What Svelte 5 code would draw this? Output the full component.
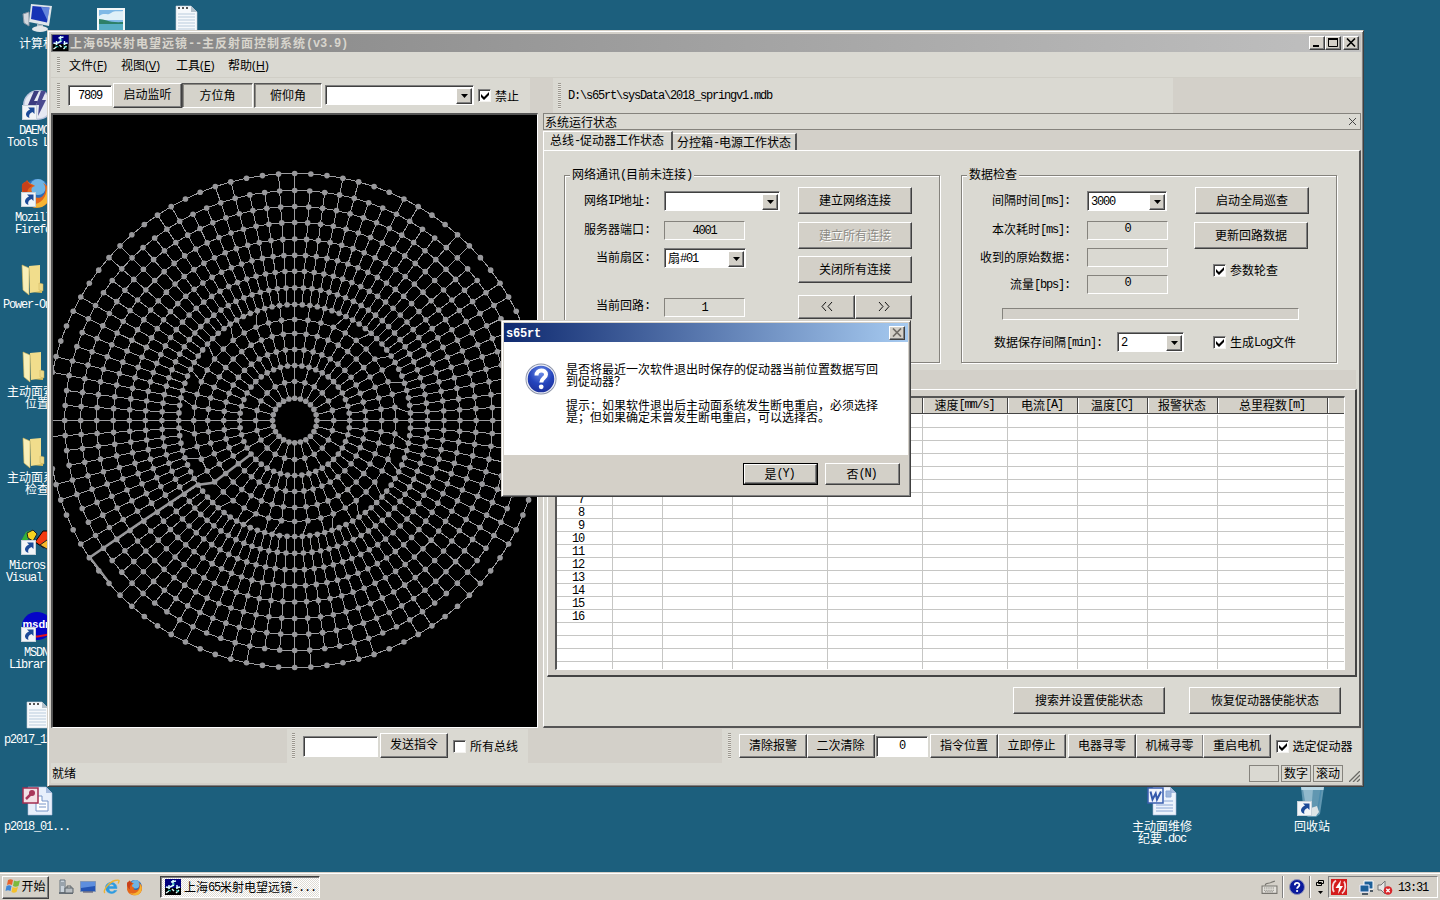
<script>
  const runs = (s) => (s.match(/[\x20-\x7e]+|[^\x20-\x7e]+/g) || []).map((x) => ({ s: x, l: x.charCodeAt(0) < 127 }));

  // reflector mesh
  const CX = 241.7, CY = 305.5;
  const rings = [[247, 96], [230, 96], [214, 96], [198, 96], [181.5, 96], [165.3, 96], [149.3, 96], [132.8, 96], [116, 96], [101, 48], [87, 48], [71, 48], [55, 48], [39, 24], [22.2, 24]];
  const pt = (r, n, k) => {
    const a = (2 * Math.PI * k) / n;
    return [CX + r * Math.sin(a), CY - r * Math.cos(a)];
  };
  const f = (p) => p[0].toFixed(1) + ' ' + p[1].toFixed(1);
  let mesh = '';
  const nodes = [];
  rings.forEach(([r, n], i) => {
    for (let k = 0; k < n; k++) {
      const p = pt(r, n, k);
      nodes.push(p);
      mesh += (k ? 'L' : 'M') + f(p);
    }
    mesh += 'Z';
    if (i === 0) return;
    const [ro, no] = rings[i - 1];
    for (let k = 0; k < n; k++) {
      if (i === 1 && k % 4 !== 0 && k % 4 !== 3) continue;
      let j = no === n ? k : 2 * k;
      if (i === 9 && k % 2 && k !== 1 && k !== 47) j += 1;
      mesh += 'M' + f(pt(r, n, k)) + 'L' + f(pt(ro, no, j));
    }
  });

  const icons = [
    { x: 37, y: 3, k: 'pc', t: ['计算机'] },
    { x: 37, y: 90, k: 'daemon', t: ['DAEMON', 'Tools Lite'] },
    { x: 36, y: 177, k: 'fox', t: ['Mozilla', 'Firefox'] },
    { x: 36, y: 264, k: 'folder', t: ['Power-On...'] },
    { x: 37, y: 351, k: 'folder', t: ['主动面索引', '位置'] },
    { x: 37, y: 437, k: 'folder', t: ['主动面系统', '检查'] },
    { x: 36, y: 525, k: 'vs', t: ['Micros...', 'Visual ...'] },
    { x: 36, y: 612, k: 'msdn', t: ['MSDN', 'Librar...'] },
    { x: 37, y: 699, k: 'note', t: ['p2017_12...'] },
    { x: 37, y: 786, k: 'access', t: ['p2018_01...'] },
    { x: 111, y: 3, k: 'pic', t: [] },
    { x: 186, y: 3, k: 'note', t: [] },
    { x: 1162, y: 786, k: 'word', t: ['主动面维修', '纪要.doc'] },
    { x: 1312, y: 786, k: 'bin', t: ['回收站'] }
  ];
  const shortcut = ['daemon', 'fox', 'vs', 'msdn', 'bin'];
  const heads = [[56, ''], [50, ''], [70, ''], [95, ''], [95, ''], [85, '速度[mm/s]'], [70, '电流[A]'], [70, '温度[C]'], [70, '报警状态'], [110, '总里程数[m]'], [17, '']];
  const rows = Array.from({ length: 20 }, (_, i) => (i < 16 ? String(i + 1) : ''));
</script>

{#snippet t(s)}{#each runs(s) as r}<span class:lat={r.l}>{r.s}</span>{/each}{/snippet}

{#snippet arrow()}<span class="drop"><svg width="7" height="4"><path d="M0 0h7L3.5 4z" /></svg></span>{/snippet}

{#snippet check(on)}<span class="check">{#if on}<svg width="9" height="9" viewBox="0 0 9 9"><path d="M0 2v3l3 3 5-5V0L3 5z" /></svg>{/if}</span>{/snippet}

{#snippet antenna(w)}
  <svg width={w} height="16" viewBox="0 0 16 16" class="app-ico">
    <rect width="16" height="16" fill="#000" /><path d="M0 0h16v9H0z" fill="#00007c" />
    <path d="M8 1v6M6 3l5-1M5 8l4-2M4 6v4M1 8l4 1M12 6v4M11 9l4-1M7 10l2 2M1 14l3-2M11 14l3-3" stroke="#dff" fill="none" stroke-width="1.400" />
    <path d="M3 11l3 1M11 11l3 2M7 5h3" stroke="#16b8a8" />
  </svg>
{/snippet}

{#snippet fox(w)}
  <svg width={w} height={w} viewBox="0 0 32 32">
    <circle cx="17" cy="15" r="13" fill="#2b6cb8" /><circle cx="18" cy="10" r="8" fill="#6fb4e4" />
    <path d="M2 8c2-4 4-2 5-5 2 4 6 4 8 6-4 1-4 4-3 6 3 0 4 2 2 4 4 4 10 1 11-4 1-4 0-7-2-9 8 4 9 13 5 19C22 34 5 32 2 20z" fill="#e4661b" />
    <path d="M27 9c5 8 3 17-5 21-6 2-12 0-15-4 10 4 20-2 20-17z" fill="#f6b432" />
    <path d="M2 8c2-4 4-2 5-5 1 4 4 5 6 6-5 1-7 6-5 11-4-3-7-6-6-12z" fill="#c8401a" />
  </svg>
{/snippet}

{#snippet help(w)}
  <svg width={w} height={w} viewBox="0 0 32 32">
    <defs><radialGradient id="hb" cx=".5" cy=".25" r=".8"><stop offset="0" stop-color="#6f8fe8" /><stop offset=".55" stop-color="#2444bc" /><stop offset="1" stop-color="#1c2f98" /></radialGradient></defs>
    <circle cx="16" cy="16" r="15.500" fill="#8b93a8" /><circle cx="16" cy="16" r="14.600" fill="#eef0f8" /><circle cx="16" cy="16" r="13.300" fill="url(#hb)" />
    <path d="M11.500 12.500c0-6.500 9.500-6.500 9.500-1 0 3.600-4.700 3.700-4.700 8" stroke="#fff" stroke-width="4" fill="none" /><circle cx="16.200" cy="23.800" r="2.400" fill="#fff" />
  </svg>
{/snippet}

{#snippet deskIcon(k)}
  {#if k === 'fox'}{@render fox(32)}
  {:else}
  <svg width="32" height="32" viewBox="0 0 32 32">
    {#if k === 'pc'}
      <path d="M2 11l6-2v14l-5-3z" fill="#d3d8de" stroke="#8794a3" /><path d="M10 1l21 2-3 20-20-4z" fill="#dfe5ea" /><path d="M11.500 3l17 1.500-2.500 15-16-3.500z" fill="#1633b5" /><path d="M20 4l8.500.6-2 13z" fill="#8fb2ef" opacity=".65" /><path d="M16 21l6 1v4l-6-1z" fill="#b6bec6" /><ellipse cx="19" cy="26" rx="8" ry="3" fill="#e3e7ea" />
    {:else if k === 'daemon'}
      <circle cx="17" cy="15" r="15" fill="#b9c4dc" /><circle cx="17" cy="15" r="13.500" fill="#e6e9f2" /><path d="M13 1h5l-5 10h4L8 27l2-12H7z" fill="#3c3c80" /><path d="M20 1h5l-4 9h4l-8 16 1-11h-3z" fill="#4a4a90" />
    {:else if k === 'folder'}
      <path d="M10 2l10 1v18l2 2v6l-12-1z" fill="#d9bf5e" /><path d="M9 2l11-1v26l-10 2z" fill="#f1dd8c" /><path d="M19 19l4 1v7l-4-1z" fill="#ecd98a" stroke="#cdb35a" stroke-width=".5" /><path d="M2 1l7 3v27l-6-5z" fill="#f8efb8" stroke="#d0b455" stroke-width=".6" />
    {:else if k === 'vs'}
      <path d="M1 16l5-9 5-2-4 12z" fill="#35b13a" /><path d="M7 8l6-3 4 4-4 7-5-3z" fill="#f6d420" stroke="#222" /><path d="M15 17l8-11h9v10l-8 7z" fill="#f23a12" stroke="#000" /><path d="M20 20l7-5 5 5-5 4z" fill="#f5b82a" stroke="#222" />
    {:else if k === 'msdn'}
      <ellipse cx="17" cy="14" rx="15" ry="14" fill="#0505c8" /><path d="M2 22c10 4 22 3 30-1" stroke="#e3101b" stroke-width="2" fill="none" /><text x="2.500" y="16" font-family="Liberation Sans" font-weight="700" font-size="11" fill="#fff">msdn</text>
    {:else if k === 'note'}
      <path d="M6 3h15l6 6v20H6z" fill="#f6f9fc" stroke="#c2cbd3" stroke-width=".6" /><path d="M21 3v6h6z" fill="#b3c0ca" /><path d="M8 11h17M8 14h17M8 17h17M8 20h17M8 23h17M8 26h17" stroke="#b9cbdc" /><path d="M8 5h2M12 5h2M16 5h2" stroke="#555" stroke-width="2" />
    {:else if k === 'pic'}
      <path d="M2 5h28v24H2z" fill="#f4f7f8" /><path d="M4 7h24v20H4z" fill="#7fb9e6" /><path d="M4 13c6-4 8 0 12-3s8-1 12-2v9H4z" fill="#dff0f8" /><path d="M4 16c6 0 10 4 24 3v4H4z" fill="#2d8068" /><path d="M4 21h24v6H4z" fill="#56aec4" />
    {:else if k === 'access'}
      <path d="M7 1h18l6 6v22H7z" fill="#e8effb" stroke="#a9bbd8" stroke-width=".6" /><path d="M25 1v6h6z" fill="#a7bbdf" /><path d="M15 10h6v5h6v10H15z" fill="#fff" stroke="#7795c8" /><path d="M18 18h7M18 21h7" stroke="#7795c8" /><path d="M2 2h15v15H2z" fill="#f3dfe5" stroke="#a32e50" stroke-width="1.500" /><circle cx="11" cy="7" r="3" fill="#a8365a" /><path d="M10 8l-5 5" stroke="#a8365a" stroke-width="2.500" />
    {:else if k === 'word'}
      <path d="M7 1h17l6 6v22H7z" fill="#edf3fc" stroke="#a9bbd8" stroke-width=".6" /><path d="M24 1v6h6z" fill="#a7bbdf" /><path d="M20 5h5v6h-5zM10 19h17M10 22h17M10 25h17M18 15h9" stroke="#8ca8d6" fill="#9fb7dc" /><path d="M2 2h15v15H2z" fill="#eef3fc" stroke="#3a5fae" stroke-width="1.500" /><path d="M4.500 5.500l2 8 3.200-6 1.300 6 4-8" stroke="#3459ac" stroke-width="2" fill="none" />
    {:else if k === 'bin'}
      <path d="M5 1h23l-4 27-4 3h-8l-4-3z" fill="#8fbdd4" opacity=".6" /><path d="M7 3h10l-2 24h-4z" fill="#d9edf5" opacity=".4" /><path d="M5 1h23l-.5 3h-22z" fill="#b9d8e6" /><path d="M25 4l-4 25" stroke="#4c8bac" stroke-width="1.500" /><path d="M15 22l6-2 2 6-3 4h-5z" fill="#dde4e6" />
    {/if}
  </svg>
  {/if}
{/snippet}

{#snippet chev(right)}<svg width="12" height="9" viewBox="0 0 12 9"><path d={right ? 'M1 0l4 4.500L1 9M7 0l4 4.500L7 9' : 'M5 0L1 4.500 5 9M11 0L7 4.500 11 9'} fill="none" stroke="#111" /></svg>{/snippet}

<div class="desktop">
  {#each icons as ic}
    <div class="dicon" style="left:{ic.x - 37}px;top:{ic.y}px">
      <div class="pic">
        {@render deskIcon(ic.k)}
        {#if shortcut.includes(ic.k)}
          <svg class="sc" width="15" height="15" viewBox="0 0 15 15"><rect x=".5" y=".5" width="14" height="14" fill="#f2f5f8" stroke="#c8d2da" /><path d="M6 2.500h6.500V9l-2-2C8 8 6.500 10 7.500 13 3 11.500 2.500 7 8 4.500z" fill="#1c4a98" /></svg>
        {/if}
      </div>
      {#each ic.t as line}<div class="dl">{@render t(line)}</div>{/each}
    </div>
  {/each}

  <section class="win">
    <header class="title">
      {@render antenna(17)}
      <span class="cap">{@render t('上海65米射电望远镜--主反射面控制系统(v3.9)')}</span>
      <span class="wb"><svg width="10" height="9"><path d="M1 8h6" stroke="#000" stroke-width="2" /></svg></span>
      <span class="wb"><svg width="10" height="9"><path d="M.5 1h9M.5 0v8.500h9V0" fill="none" stroke="#000" /><path d="M0 1h10" stroke="#000" stroke-width="2" /></svg></span>
      <span class="wb last"><svg width="10" height="9"><path d="M1 .5l8 8M9 .5l-8 8" stroke="#000" stroke-width="1.600" /></svg></span>
    </header>
    <nav class="menu">
      <i class="grip"></i>
      <span style="width:52px">文件<em>(<u>F</u>)</em></span><span style="width:55px">视图<em>(<u>V</u>)</em></span><span style="width:52px">工具<em>(<u>E</u>)</em></span><span>帮助<em>(<u>H</u>)</em></span>
    </nav>
    <div class="tools">
      <div class="band one">
        <i class="grip"></i>
        <span class="edit" style="width:44px">{@render t('7809')}</span>
        <span class="btn" style="width:69px">启动监听</span>
        <span class="flat" style="width:71px">方位角</span>
        <span class="flat" style="width:68px">俯仰角</span>
        <span class="combo" style="width:149px"><b></b>{@render arrow()}</span>
        {@render check(true)}<span>禁止</span>
      </div>
      <div class="band two"><i class="grip"></i>{@render t('D:\\s65rt\\sysData\\2018_springv1.mdb')}</div>
    </div>

    <div class="body">
      <div class="view">
        <svg width="484" height="611" viewBox="0 0 484 611">
          <path d={mesh} fill="none" stroke="#9c9c9f" stroke-width="1" shape-rendering="crispEdges" />
          {#each nodes as p}<circle cx={p[0]} cy={p[1]} r="2.800" fill="#98989b" />{/each}
          <path d="M199.300 338.300L160.300 367.700L143.700 370L90.300 405.700L37 442.300" fill="none" stroke="#98989b" stroke-width="2.600" />
          <path d="M37 442.300L57 468.500" stroke="#98989b" stroke-width="2" />
        </svg>
      </div>
      <div class="dock">
        <div class="dtitle"><span>系统运行状态</span><svg width="9" height="9"><path d="M1 1l7 7M8 1l-7 7" stroke="#444" /></svg></div>
        <div class="tabs"><span class="tab on">{@render t('总线-促动器工作状态')}</span><span class="tab">{@render t('分控箱-电源工作状态')}</span></div>
        <div class="page">
          <div class="groups">
            <div class="group">
              <div class="legend">{@render t('网络通讯(目前未连接)')}</div>
              <div class="col lab" style="width:85px">
                <div style="margin-top:15px">{@render t('网络IP地址:')}</div>
                <div style="margin-top:11px">{@render t('服务器端口:')}</div>
                <div style="margin-top:10px">{@render t('当前扇区:')}</div>
                <div style="margin-top:30px">{@render t('当前回路:')}</div>
              </div>
              <div class="col" style="width:116px;margin-left:14px">
                <span class="combo" style="width:116px;margin-top:15px"><b></b>{@render arrow()}</span>
                <span class="stat" style="margin-top:10px">{@render t('4001')}</span>
                <span class="combo" style="width:82px;margin-top:8px"><b>{@render t('扇#01')}</b>{@render arrow()}</span>
                <span class="stat" style="margin-top:30px">{@render t('1')}</span>
              </div>
              <div class="col" style="margin-left:18px">
                <span class="btn big" style="margin-top:11px">建立网络连接</span>
                <span class="btn big off" style="margin-top:8px">建立所有连接</span>
                <span class="btn big" style="margin-top:7px">关闭所有连接</span>
                <div class="pair"><span class="btn">{@render chev(false)}</span><span class="btn">{@render chev(true)}</span></div>
              </div>
            </div>
            <div class="group vert">
              <div class="legend">数据检查</div>
              <div class="line">
                <div class="col lab" style="width:108px">
                  <div style="margin-top:15px">{@render t('间隔时间[ms]:')}</div>
                  <div style="margin-top:11px">{@render t('本次耗时[ms]:')}</div>
                  <div style="margin-top:10px">{@render t('收到的原始数据:')}</div>
                  <div style="margin-top:9px">{@render t('流量[bps]:')}</div>
                </div>
                <div class="col" style="margin-left:17px">
                  <span class="combo" style="width:80px;margin-top:15px"><b>{@render t('3000')}</b>{@render arrow()}</span>
                  <span class="stat up" style="margin-top:10px">{@render t('0')}</span>
                  <span class="stat" style="margin-top:8px"></span>
                  <span class="stat up" style="margin-top:8px">{@render t('0')}</span>
                </div>
                <div class="col" style="margin-left:26px">
                  <span class="btn big" style="margin-top:11px;margin-left:1px">启动全局巡查</span>
                  <span class="btn big" style="margin-top:8px">更新回路数据</span>
                  <div class="ck" style="margin:13px 0 0 19px">{@render check(true)}<span>参数轮查</span></div>
                </div>
              </div>
              <div class="prog"></div>
              <div class="save">
                <div class="sl">{@render t('数据保存间隔[min]:')}</div>
                <span class="combo" style="width:67px"><b>{@render t('2')}</b>{@render arrow()}</span>
                <div class="ck">{@render check(true)}<span>{@render t('生成Log文件')}</span></div>
              </div>
            </div>
          </div>
          <div class="panel">
            <div class="list">
              <div class="lh">{#each heads as h}<span style="width:{h[0]}px">{@render t(h[1])}</span>{/each}</div>
              {#each rows as r}
                <div class="lr">{#each heads as h, i}<span style="width:{h[0]}px">{#if i === 0}{@render t(r)}{/if}</span>{/each}</div>
              {/each}
            </div>
          </div>
          <div class="acts"><span class="btn">搜索并设置使能状态</span><span class="btn">恢复促动器使能状态</span></div>
        </div>
      </div>
    </div>

    <div class="foot">
      <div class="band three">
        <i class="grip"></i><span class="edit" style="width:75px"></span><span class="btn" style="width:68px">发送指令</span>
        {@render check(false)}<span>所有总线</span>
      </div>
      <div class="band four">
        <i class="grip"></i>
        <span class="btn">清除报警</span><span class="btn">二次清除</span>
        <span class="edit" style="width:52px">{@render t('0')}</span>
        <span class="btn">指令位置</span><span class="btn">立即停止</span>
        <span class="btn gap">电器寻零</span><span class="btn">机械寻零</span><span class="btn">重启电机</span>
        {@render check(true)}<span>选定促动器</span>
      </div>
    </div>
    <footer class="status">
      <span class="ready">就绪</span><span class="pane"></span><span class="pane">数字</span><span class="pane">滚动</span>
      <svg width="11" height="11"><path d="M0 11L11 0M4 11l7-7M8 11l3-3" stroke="#6a6a66" stroke-width="1.300" /></svg>
    </footer>
  </section>

  <section class="dialog">
    <header><span>{@render t('s65rt')}</span><span class="wb"><svg width="10" height="9"><path d="M1 .5l8 8M9 .5l-8 8" stroke="#706c66" stroke-width="1.700" /></svg></span></header>
    <div class="msg">
      {@render help(32)}
      <div class="lines">
        <p>是否将最近一次软件退出时保存的促动器当前位置数据写回</p>
        <p>到促动器？</p>
        <p>&nbsp;</p>
        <p>提示：如果软件退出后主动面系统发生断电重启，必须选择</p>
        <p>是；但如果确定未曾发生断电重启，可以选择否。</p>
      </div>
    </div>
    <div class="dbtns"><span class="btn def">{@render t('是(Y)')}</span><span class="btn">{@render t('否(N)')}</span></div>
  </section>

  <div class="taskbar">
    <span class="btn start">
      <svg width="16" height="16" viewBox="0 0 16 16"><path d="M3 2c2-1 3-1 5 0L7 7C5 6 4 6 2 7z" fill="#e8632c" /><path d="M9 2.500c2 1 3 1 6 0L13.500 8c-2 1-4 1-5.500 0z" fill="#7dba3c" /><path d="M1.500 8c2-1 3-1 5 0l-1 5c-2-1-3-1-5 0z" fill="#3f87d8" /><path d="M7.500 9c2 1 3 1 5.500 0l-1.500 5c-2 1-3.500 1-5 0z" fill="#f5c12c" /></svg>开始</span>
    <div class="quick">
      <svg width="16" height="16" viewBox="0 0 16 16"><path d="M2 1h5v13H2z" fill="#c9d2da" stroke="#68747f" /><path d="M3 4h3M3 6h3" stroke="#68747f" /><path d="M1 14h14" stroke="#687078" stroke-width="2" /><path d="M7 9h8v5H7z" fill="#b9bec2" stroke="#5a6268" /><path d="M9 9V7h4v2" fill="none" stroke="#5a6268" /></svg>
      <svg width="16" height="16" viewBox="0 0 16 16"><path d="M.5 2.500h15v10H.5z" fill="#2454b4" stroke="#8197b8" /><path d="M1 3h14v4L1 9z" fill="#5d8ede" /><path d="M3 13h10" stroke="#446" /></svg>
      <svg width="17" height="16" viewBox="0 0 17 16"><path d="M14 9.500H6c0 4 4 4 5 2h2.800C11 16.500 2.500 15 2.500 8.500S14 1 14 9.500zM6 7.500h5C10.500 4.500 6.500 4.500 6 7.500z" fill="#2d9be0" stroke="#2d9be0" stroke-width=".5" /><path d="M2 14C-1 12 6 3 12 1.500s4 1 3 3" fill="none" stroke="#efb32e" stroke-width="1.300" /></svg>
      {@render fox(17)}
    </div>
    <span class="task">{@render antenna(16)}<span>{@render t('上海65米射电望远镜-...')}</span></span>
    <div class="tray">
      <svg width="17" height="15" viewBox="0 0 16 14"><path d="M1 5.500h14v7H1z" fill="#e4e2dc" stroke="#77756f" /><path d="M3 7.500h10M3 9.500h10M4 11h8" stroke="#77756f" stroke-dasharray="1 1" /><path d="M4 5c0-3 4-1 6-3l3-1" stroke="#77756f" fill="none" /></svg>
      <i class="sep"></i>
      <span class="th"><svg width="16" height="16" viewBox="0 0 16 16"><circle cx="8" cy="8" r="7.500" fill="#0a1a9c" stroke="#8c90b8" /><path d="M5.800 6.200c0-3 4.600-3 4.600-.3 0 1.900-2.300 1.800-2.300 3.800" stroke="#fff" stroke-width="1.800" fill="none" /><circle cx="8.100" cy="12" r="1.100" fill="#fff" /></svg></span>
      <i class="sep"></i>
      <svg class="chev" width="9" height="16" viewBox="0 0 9 16"><path d="M2.500 1.500h5v3h-5zM.5 3.500h5v3h-5z" fill="#d4d0c8" stroke="#000" /><path d="M2 12h5l-2.500 3z" /></svg>
      <div class="box">
        <svg width="16" height="16" viewBox="0 0 16 16"><rect width="16" height="16" fill="#d41c1c" /><path d="M5 1.500C1 4 1 10 3 13M11 14.500c4-3 4-9 2-12" stroke="#f7d6d6" stroke-width="1.800" fill="none" /><path d="M10 1L4.500 9H8l-1 6 5-8H9z" fill="#fff" /></svg>
        <svg width="15" height="15" viewBox="0 0 15 15"><path d="M5 1h9v8H5z" fill="#1d5f98" stroke="#fff" /><path d="M1 5h9v7H1z" fill="#1d5f98" stroke="#eef" /><path d="M3 14h6M11 11h3" stroke="#234" stroke-width="1.500" /></svg>
        <svg width="16" height="15" viewBox="0 0 16 15"><path d="M1 5h3l4-4v13l-4-4H1z" fill="#e8e8e8" stroke="#777" /><circle cx="11" cy="10.500" r="4.300" fill="#d8262a" /><path d="M9.300 8.800l3.400 3.400M12.700 8.800l-3.400 3.400" stroke="#fff" stroke-width="1.300" /></svg>
        <span>{@render t('13:31')}</span>
      </div>
    </div>
  </div>
</div>

<style>
  :global(body) { margin: 0; overflow: hidden; }
  .desktop { position: relative; width: 1440px; height: 900px; overflow: hidden; background: #1c5f7d; font: 12px/16px "Noto Sans CJK SC", sans-serif; color: #000; white-space: nowrap; }
  .desktop * { box-sizing: border-box; }
  svg { display: block; flex: none; }
  .lat { font-family: "Liberation Mono", monospace; font-size: 12px; letter-spacing: -1.2px; line-height: 10px; vertical-align: 1px; white-space: pre; }

  .dicon { position: absolute; width: 74px; color: #fff; text-align: center; }
  .pic { position: relative; width: 32px; height: 34px; margin: 0 auto; }
  .sc { position: absolute; left: 1px; top: 15px; }
  .dl { height: 12px; line-height: 12px; }

  .win { position: absolute; left: 47px; top: 30px; width: 1317px; height: 757px; background: #d3d0c9; border: 1px solid #d4d0c8; border-right-color: #404040; border-bottom-color: #404040; box-shadow: inset 1px 1px #fff, inset -1px -1px #808080; padding: 3px 2px 3px 3px; display: flex; flex-direction: column; }
  .title { height: 18px; display: flex; align-items: center; background: linear-gradient(90deg, #828282, #c0c0c0); padding-right: 2px; }
  .app-ico { margin-left: 1px; }
  .cap { flex: 1; margin-left: 1px; color: #d8d5cd; font-weight: 700; letter-spacing: 1px; }
  .cap .lat, .cap :global(.lat) { letter-spacing: -0.2px; }
  .wb { width: 16px; height: 14px; display: flex; align-items: center; justify-content: center; background: #d4d0c8; border: 1px solid #fff; border-right-color: #404040; border-bottom-color: #404040; box-shadow: inset -1px -1px #808080; padding: 0 2px 1px 1px; }
  .wb.last { margin-left: 2px; }
  .menu { height: 26px; display: flex; align-items: center; background: #dad9d2; padding-left: 6px; border-bottom: 1px solid #d0cec6; }
  .menu .grip { height: 15px; margin-right: 9px; }
  .menu span { padding-top: 1px; }
  .menu em { font: 12.500px/12px "Open Sans", sans-serif; }
  .grip { flex: none; width: 3px; height: 26px; background: repeating-linear-gradient(#9b9890 0 1px, #e9e7e1 1px 2px); }
  .tools { height: 35px; display: flex; }
  .band { display: flex; align-items: center; background: #dad9d2; }
  .one { width: 479px; padding-left: 6px; }
  .one .grip { margin-right: 8px; }
  .one .btn { margin-left: 1px; margin-bottom: 1px; }
  .flat { height: 25px; display: flex; align-items: center; justify-content: center; background: #d5d3cb; border: 1px solid #555; border-right-color: #fff; border-bottom-color: #fff; box-shadow: inset 1px 1px #8a8882; margin: 0 1px 1px 0; padding-bottom: 1px; }
  .one .combo { margin: 0 4px 2px 2px; }
  .two { margin-left: 23px; width: 620px; padding-left: 5px; }
  .two .grip { margin-right: 7px; }
  .check { flex: none; width: 13px; height: 13px; background: #fff; border: 1px solid #808080; border-right-color: #f4f3f0; border-bottom-color: #f4f3f0; box-shadow: inset 1px 1px #404040; padding: 2px 0 0 2px; margin-right: 4px; }
  .edit { height: 21px; display: flex; align-items: center; justify-content: center; background: #fff; border: 1px solid #808080; border-right-color: #fff; border-bottom-color: #fff; box-shadow: inset 1px 1px #404040; }
  .btn { height: 25px; display: flex; align-items: center; justify-content: center; flex: none; background: #d3d0c8; border: 1px solid #fff; border-right-color: #404040; border-bottom-color: #404040; box-shadow: inset -1px -1px #808080; padding-bottom: 2px; }
  .combo { flex: none; height: 20px; display: flex; background: #fff; border: 1px solid #808080; border-right-color: #fff; border-bottom-color: #fff; box-shadow: inset 1px 1px #404040; padding: 2px 1px 1px 3px; }
  .combo b { flex: 1; font-weight: 400; line-height: 14px; }
  .drop { width: 16px; height: 16px; display: flex; align-items: center; justify-content: center; background: #d3d0c8; border: 1px solid #fff; border-right-color: #404040; border-bottom-color: #404040; box-shadow: inset -1px -1px #808080; }

  .body { height: 615px; display: flex; }
  .view { flex: none; width: 487px; background: #000; border: 1px solid #777; border-top: 2px solid #555; border-left: 2px solid #555; border-right-color: #fff; border-bottom-color: #fff; overflow: hidden; }
  .dock { flex: none; margin-left: 5px; width: 818px; }
  .dtitle { height: 17px; border: 1px solid #85837d; background: #dad9d2; display: flex; align-items: center; justify-content: space-between; padding: 0 3px 0 1px; }
  .tabs { height: 20px; display: flex; align-items: flex-end; }
  .tab { height: 17px; line-height: 16px; padding: 0 4px; border-right: 2px solid #555; border-top: 1px solid #fff; background: #d6d4cd; }
  .tab.on { height: 19px; width: 130px; padding: 0 0 0 6px; background: #dad9d2; border-left: 1px solid #fff; }
  .page { height: 578px; background: #dad9d2; border: 1px solid #fff; border-right: 2px solid #555; border-bottom: 2px solid #555; padding: 0 3px; }
  .groups { height: 238px; display: flex; padding: 24px 0 0 17px; background: linear-gradient(#dad9d2 219px, #d3d0c9 219px); }
  .group { flex: none; position: relative; display: flex; width: 376px; height: 188px; border: 1px solid #85837d; box-shadow: inset 1px 1px #fff, 1px 1px #fff; margin-right: 21px; }
  .vert { display: block; margin-right: 0; }
  .legend { position: absolute; left: 5px; top: -10px; background: #dad9d2; padding: 0 2px; }
  .line, .ck, .save, .pair { display: flex; }
  .col { display: flex; flex-direction: column; flex: none; }
  .lab { text-align: right; }
  .lab div { height: 18px; line-height: 18px; }
  .stat { width: 81px; height: 19px; border: 1px solid #85837d; border-right-color: #fff; border-bottom-color: #fff; display: flex; align-items: center; justify-content: center; }
  .up { padding-bottom: 3px; }
  .big { width: 114px; height: 27px; }
  .off { color: #8d8b85; text-shadow: 1px 1px #fff; }
  .pair { margin-top: 12px; }
  .pair .btn { width: 57px; height: 24px; }
  .ck { align-items: center; }
  .prog { width: 297px; height: 12px; margin: 14px 0 0 40px; border: 1px solid #85837d; border-right-color: #fff; border-bottom-color: #fff; background: #d3d0c9; }
  .line { height: 118px; }
  .save { align-items: center; margin-top: 12px; }
  .sl { width: 140px; text-align: right; margin-right: 15px; }
  .save .ck { margin-left: 29px; }
  .panel { width: 810px; height: 288px; background: #d3d0c9; border: 1px solid #fff; border-right: 2px solid #444; border-bottom: 2px solid #444; padding: 6px 0 0 7px; }
  .list { width: 790px; height: 274px; overflow: hidden; background: #fff; border: 1px solid #fff; border-left: 2px solid #555; border-top: 2px solid #555; }
  .lh { display: flex; height: 16px; border-bottom: 1px solid #444; background: #d3d0c8; margin-bottom: 1px; }
  .lh > span { flex: none; display: flex; height: 15px; align-items: center; justify-content: center; border-left: 1px solid #fff; border-right: 1px solid #444; padding-bottom: 1px; padding-right: 2px; }
  .lr { display: flex; height: 13px; line-height: 11px; border-bottom: 1px solid #c6c6c4; }
  .lr > span { flex: none; height: 13px; border-right: 1px solid #c6c6c4; text-align: right; padding-right: 28px; }
  .lr > span:not(:first-child) { padding: 0; }
  .acts { display: flex; justify-content: flex-end; gap: 24px; padding: 10px 15px 0 0; }
  .acts .btn { width: 152px; height: 27px; }

  .foot { height: 34px; display: flex; margin-top: 1px; }
  .three { width: 241px; margin-left: 236px; padding-left: 5px; }
  .three .grip { margin-right: 8px; }
  .three .btn { margin: 0 5px 2px 2px; }
  .four { flex: 1; margin-left: 194px; padding-left: 6px; }
  .four .grip { margin-right: 8px; }
  .four .btn { width: 68px; height: 24px; margin-right: -0.5px; margin-bottom: 1px; }
  .four .edit { margin: 0 2px 0 2px; }
  .four .gap { margin-left: 3px; }
  .four .check { margin-left: 5px; }
  .status { flex: 1; display: flex; align-items: center; background: #dad9d2; gap: 2px; padding: 0 1px 0 1px; }
  .ready { flex: 1; }
  .pane { width: 30px; height: 17px; border: 1px solid #85837d; display: flex; align-items: center; justify-content: center; }
  .status svg { margin: 6px 0 0 4px; }

  .dialog { position: absolute; left: 501px; top: 320px; width: 410px; height: 177px; background: #d4d0c8; border: 1px solid #d4d0c8; border-right-color: #404040; border-bottom-color: #404040; box-shadow: inset 1px 1px #fff, inset -1px -1px #808080; padding: 2px; }
  .dialog header { height: 19px; display: flex; align-items: center; justify-content: space-between; background: linear-gradient(90deg, #0f2a70, #a6caf0); color: #fff; font-weight: 700; padding: 0 3px 0 2px; }
  .dialog header :global(.lat) { letter-spacing: -0.2px; }
  .msg { height: 113px; display: flex; background: #fff; padding: 21px 0 0 21px; }
  .lines { margin-left: 9px; }
  .lines p { margin: 0; line-height: 12px; }
  .dbtns { display: flex; gap: 7px; justify-content: flex-end; padding: 8px 8px 0 0; }
  .dbtns .btn { width: 75px; height: 22px; padding: 0 2px 0 0; }
  .dbtns .def { outline: 1px solid #000; outline-offset: -1px; border: 2px solid #000; border-color: #fff #404040 #404040 #fff; }

  .taskbar { position: absolute; left: 0; top: 872px; width: 1440px; height: 28px; background: #d4d0c8; border-top: 1px solid #d4d0c8; box-shadow: inset 0 1px #fff; display: flex; align-items: center; padding: 1px 2px 0 2px; }
  .start { width: 47px; height: 23px; }
  .quick { display: flex; width: 85px; margin-left: 9px; justify-content: space-between; align-items: center; }
  .task { width: 160px; height: 22px; margin-left: 17px; display: flex; align-items: center; padding-left: 3px; border: 1px solid #404040; border-right-color: #fff; border-bottom-color: #fff; box-shadow: inset 1px 1px #808080; background: repeating-conic-gradient(#fff 0 25%, #dedbd4 0 50%) 0 0 / 2px 2px; }
  .task > span { margin-left: 3px; }
  .tray { flex: 1; display: flex; align-items: center; justify-content: flex-end; }
  .sep { width: 2px; height: 22px; margin: 0 5px 0 4px; border-left: 1px solid #808080; border-right: 1px solid #fff; }
  .chev { margin-right: 3px; }
  .box { width: 110px; height: 22px; display: flex; align-items: center; border: 1px solid #808080; border-right-color: #fff; border-bottom-color: #fff; padding-left: 2px; }
  .box svg:nth-child(2) { margin-left: 12px; }
  .box svg:nth-child(3) { margin-left: 3px; }
  .box span { letter-spacing: -1.2px; }
  .box > span { margin-left: 5px; }
</style>
